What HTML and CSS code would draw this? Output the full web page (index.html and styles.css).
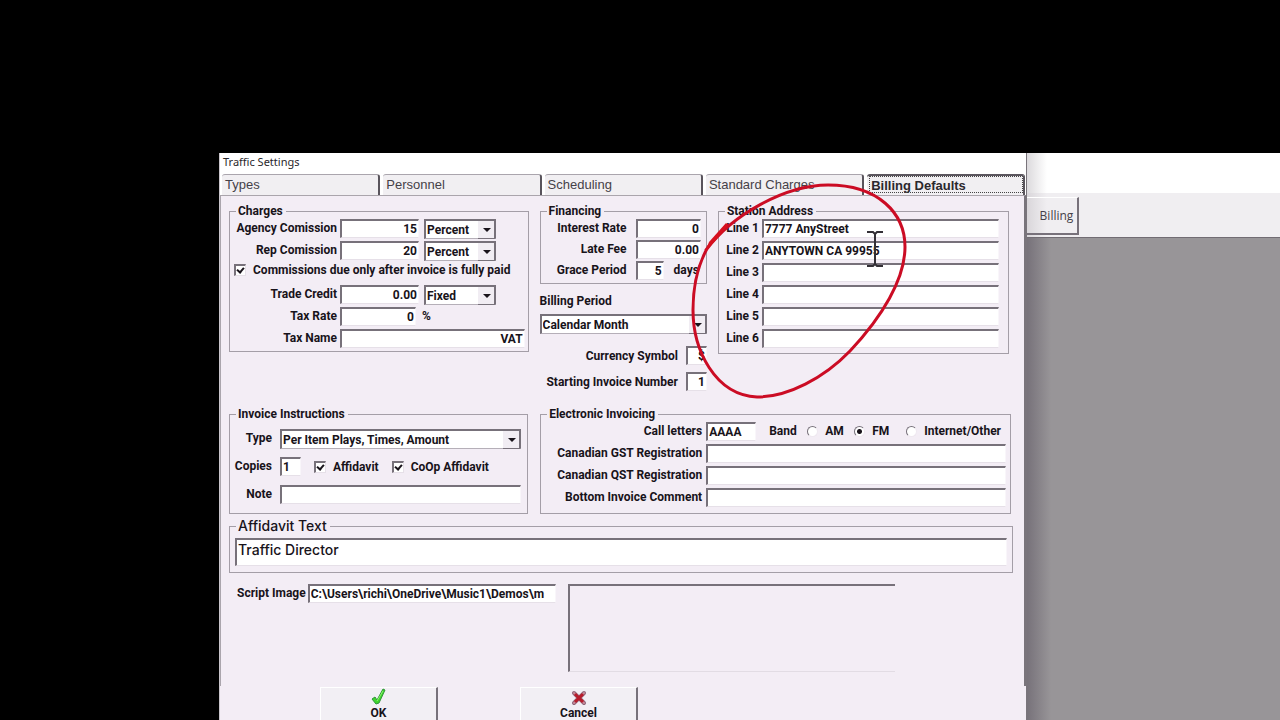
FILE: index.html
```html
<!DOCTYPE html>
<html lang="en">
<head>
<meta charset="utf-8">
<title>Traffic Settings</title>
<link rel="stylesheet" href="styles.css">
</head>
<body>
<main class="desktop">
  <section class="dialog" aria-label="Traffic Settings">
    <header class="titlebar">Traffic Settings</header>
    <nav class="tabs" role="tablist">
      <button class="tab" role="tab">Types</button>
      <button class="tab" role="tab">Personnel</button>
      <button class="tab" role="tab">Scheduling</button>
      <button class="tab" role="tab">Standard Charges</button>
      <button class="tab tab-active" role="tab" aria-selected="true">Billing Defaults</button>
    </nav>
    <form class="panel">
      <div class="row-top">
        <fieldset class="group charges">
          <legend>Charges</legend>
          <label class="lbl" for="agency">Agency Comission</label>
          <input class="field num" id="agency" value="15">
          <span class="combo"><select aria-label="Agency unit"><option>Percent</option><option>Fixed</option></select></span>
          <label class="lbl" for="rep">Rep Comission</label>
          <input class="field num" id="rep" value="20">
          <span class="combo"><select aria-label="Rep unit"><option>Percent</option><option>Fixed</option></select></span>
          <label class="check wide"><input type="checkbox" checked>Commissions due only after invoice is fully paid</label>
          <label class="lbl" for="credit">Trade Credit</label>
          <input class="field num" id="credit" value="0.00">
          <span class="combo"><select aria-label="Credit unit"><option>Fixed</option><option>Percent</option></select></span>
          <label class="lbl" for="rate">Tax Rate</label>
          <input class="field num rate" id="rate" value="0">
          <span class="unit">%</span>
          <label class="lbl" for="taxname">Tax Name</label>
          <input class="field num span-two" id="taxname" value="VAT">
        </fieldset>

        <div class="middle">
          <fieldset class="group financing">
            <legend>Financing</legend>
            <label class="lbl" for="interest">Interest Rate</label>
            <input class="field num" id="interest" value="0">
            <label class="lbl" for="late">Late Fee</label>
            <input class="field num" id="late" value="0.00">
            <label class="lbl" for="grace">Grace Period</label>
            <span class="grace"><input class="field num" id="grace" value="5">days</span>
          </fieldset>
          <label class="period-label" for="period">Billing Period</label>
          <span class="combo combo-period"><select id="period"><option>Calendar Month</option></select></span>
          <div class="small-row"><label for="currency">Currency Symbol</label><input class="field num" id="currency" value="$"></div>
          <div class="small-row"><label for="startno">Starting Invoice Number</label><input class="field num" id="startno" value="1"></div>
        </div>

        <fieldset class="group station">
          <legend>Station Address</legend>
          <label class="lbl" for="l1">Line 1</label><input class="field" id="l1" value="7777 AnyStreet">
          <label class="lbl" for="l2">Line 2</label><input class="field" id="l2" value="ANYTOWN CA 99955">
          <label class="lbl" for="l3">Line 3</label><input class="field" id="l3">
          <label class="lbl" for="l4">Line 4</label><input class="field" id="l4">
          <label class="lbl" for="l5">Line 5</label><input class="field" id="l5">
          <label class="lbl" for="l6">Line 6</label><input class="field" id="l6">
        </fieldset>
      </div>

      <div class="row-mid">
        <fieldset class="group invoice">
          <legend>Invoice Instructions</legend>
          <label class="lbl" for="type">Type</label>
          <span class="combo"><select id="type"><option>Per Item Plays, Times, Amount</option></select></span>
          <label class="lbl" for="copies">Copies</label>
          <div class="copies">
            <input class="field" id="copies" value="1">
            <label class="check"><input type="checkbox" checked>Affidavit</label>
            <label class="check"><input type="checkbox" checked>CoOp Affidavit</label>
          </div>
          <label class="lbl" for="note">Note</label>
          <input class="field" id="note">
        </fieldset>

        <fieldset class="group electronic">
          <legend>Electronic Invoicing</legend>
          <label class="lbl" for="call">Call letters</label>
          <div class="band">
            <input class="field" id="call" value="AAAA">
            <span>Band</span>
            <label class="radio"><input type="radio" name="band">AM</label>
            <label class="radio"><input type="radio" name="band" checked>FM</label>
            <label class="radio"><input type="radio" name="band">Internet/Other</label>
          </div>
          <label class="lbl" for="gst">Canadian GST Registration</label><input class="field" id="gst">
          <label class="lbl" for="qst">Canadian QST Registration</label><input class="field" id="qst">
          <label class="lbl" for="comment">Bottom Invoice Comment</label><input class="field" id="comment">
        </fieldset>
      </div>

      <fieldset class="group affidavit">
        <legend>Affidavit Text</legend>
        <input class="field" aria-label="Affidavit Text" value="Traffic Director">
      </fieldset>

      <div class="script-row">
        <label for="script">Script Image</label>
        <input class="field" id="script" value="C:\Users\richi\OneDrive\Music1\Demos\m">
        <div class="preview"></div>
      </div>
    </form>
    <footer class="actions">
      <button class="action">
        <svg width="16" height="18" viewBox="0 0 16 18"><path d="M1 11 L4 9 L6 12 L12 1 L14 2 L8 15 L5 16 Z" fill="#3fd52c" stroke="#31963a" stroke-width="1"/><path d="M6 13 L12 3" stroke="#8cf56c" stroke-width="1"/></svg>
        OK
      </button>
      <button class="action">
        <svg width="16" height="18" viewBox="0 0 16 18"><path d="M3 5 L13 15 M13 5 L3 15" stroke="#8d6478" stroke-width="4" stroke-linecap="round"/><path d="M3 5 L13 15 M13 5 L3 15" stroke="#c98a98" stroke-width="2" stroke-linecap="round"/><path d="M4 6 L12 14 M12 6 L4 14" stroke="#b81d2c" stroke-width="3"/></svg>
        Cancel
      </button>
    </footer>
    <svg class="marker" width="230" height="226" viewBox="685 176 230 226" aria-hidden="true">
      <path d="M706 250 C732 215 785 185 828 185 C878 185 905 213 905 247 C905 279 882 317 850 351 C824 378 788 397 757 397 C715 395 693 350 693 310 C693 286 697 266 708 247 L727 225" fill="none" stroke="#cb0c24" stroke-width="3" stroke-linejoin="round" stroke-linecap="round"/>
      <path d="M705 252 L709 242 L726 223 L728 226 L716 240 Z" fill="#d6101f"/>
    </svg>
    <svg class="caret" width="18" height="38" viewBox="0 0 18 38" aria-hidden="true">
      <path d="M1 2 H7 L9 4 L11 2 H17 M9 4 V34 M1 36 H7 L9 34 L11 36 H17" fill="none" stroke="#333036" stroke-width="2"/>
    </svg>
  </section>

  <section class="backwindow" aria-label="Billing window">
    <div class="back-title"></div>
    <div class="toolbar"><button class="tool">Billing</button></div>
    <div class="workspace"></div>
  </section>
</main>
</body>
</html>
```
FILE: styles.css
```css
* { box-sizing: border-box; }

body {
  margin: 0;
  background: #000;
  color: #18131a;
  font: bold 12px/14px Roboto, "Liberation Sans", sans-serif;
  height: 100vh;
  overflow: hidden;
}

input, select, button { font: inherit; color: inherit; margin: 0; border-radius: 0; }

.desktop {
  display: flex;
  height: 100vh;
  padding: 153px 0 0 219px;
}

.dialog {
  position: relative;
  flex: 808 1 0;
  min-width: 0;
  height: 600px;
  background: #f3edf5;
  border-left: 1px solid #c9c5cb;
  border-right: 1px solid #79747b;
}

.titlebar {
  height: 21px;
  padding: 0 3px;
  background: #fff;
  color: #29262b;
  font: 11px/17px "Noto Sans", sans-serif;
}

.tabs {
  display: grid;
  grid-template-columns: repeat(5, 1fr);
  gap: 3px;
  height: 21px;
  padding: 0 1px 0 2px;
  background: #fff;
}

.tab {
  padding: 0 3px;
  border: 0;
  border-top: 1px solid #aaa5ad;
  border-right: 2px solid #59545c;
  border-radius: 3px 3px 0 0;
  background: #f1eff2;
  color: #454148;
  font: 13px/18px "Liberation Sans", sans-serif;
  text-align: left;
}

.tab-active {
  border-top: 2px solid #5b565e;
  outline: 1px dotted #444;
  outline-offset: -3px;
  padding: 0 4px;
  color: #2b282d;
  font-weight: bold;
}

.panel {
  display: flex;
  flex-direction: column;
  height: 491px;
  padding: 8px 11px 0 8px;
  border: 1px solid #aaa5ac;
  border-right: 2px solid #79747b;
  border-bottom: 0;
}

.group {
  display: grid;
  align-content: start;
  grid-auto-rows: 20px;
  min-width: 0;
  margin: 0;
  padding: 1px 0 0;
  border: 1px solid #a49ea7;
}

.group legend { margin-left: 6px; padding: 0 3px 0 2px; height: 14px; }

.lbl { text-align: right; line-height: 19px; white-space: nowrap; }

.field {
  width: 100%;
  min-width: 0;
  height: 19px;
  padding: 0 1px;
  border: 2px solid #77717a;
  border-right: 1px solid #f9f6fa;
  border-bottom: 1px solid #e6e0e8;
  background: #fff;
  outline: 0;
}

.num { text-align: right; }

.combo { position: relative; display: block; height: 20px; }

.combo select {
  width: 100%;
  height: 20px;
  padding: 0 1px;
  border: 2px solid #77717a;
  border-right-width: 1px;
  border-bottom: 1px solid #b5afb8;
  background: #fff;
  appearance: none;
  outline: 0;
}

.combo::before {
  content: "";
  position: absolute;
  top: 2px;
  right: 1px;
  width: 16px;
  height: 17px;
  background: #f1edf3;
  border-right: 1px solid #77717a;
  border-bottom: 1px solid #77717a;
  pointer-events: none;
}

.combo::after {
  content: "";
  position: absolute;
  top: 9px;
  right: 5px;
  border: 4px solid transparent;
  border-top-color: #18131a;
  border-bottom: 0;
  pointer-events: none;
}

.row-top {
  display: grid;
  grid-template-columns: 299fr 167fr 291fr;
  gap: 11px;
  align-items: start;
  padding-right: 4px;
}

.charges { grid-template-columns: 107px 79px 1fr; column-gap: 3px; row-gap: 2px; padding-bottom: 2px; }
.charges .combo { width: 72px; margin-left: 2px; }
.charges .rate { width: 76px; }
.wide { grid-column: 1 / -1; padding-left: 4px; }
.span-two { grid-column: 2 / -1; width: auto; margin-right: 3px; }
.unit { line-height: 18px; }

.check { display: flex; align-items: center; gap: 7px; height: 14px; white-space: nowrap; }

.check input {
  appearance: none;
  position: relative;
  width: 12px;
  height: 12px;
  border: 1px solid #77717a;
  border-width: 2px 1px 1px 2px;
  border-right-color: #e6e0e8;
  border-bottom-color: #e6e0e8;
  background: #fff;
}

.check input:checked::after {
  content: "";
  position: absolute;
  left: 2px;
  top: 0;
  width: 3px;
  height: 5px;
  border: solid #18131a;
  border-width: 0 2px 2px 0;
  transform: rotate(40deg);
}

.middle { display: flex; flex-direction: column; }
.financing { grid-template-columns: 86px 1fr; column-gap: 9px; row-gap: 1px; padding: 1px 5px 2px 0; }
.grace { display: flex; gap: 10px; line-height: 19px; }
.grace .field { flex: none; width: 28px; }
.period-label { margin: 10px 0 6px; }
.combo-period { margin-bottom: 12px; }
.small-row { display: flex; justify-content: flex-end; gap: 8px; height: 20px; margin-bottom: 6px; line-height: 20px; white-space: nowrap; }
.small-row .field { width: 21px; }

.station { grid-template-columns: 40px 1fr; column-gap: 3px; row-gap: 2px; padding: 1px 9px 4px 0; }

.row-mid {
  display: grid;
  grid-template-columns: 299fr 471fr;
  gap: 12px;
  margin-top: 9px;
  padding-right: 2px;
}

.invoice { grid-template-columns: 42px 1fr; column-gap: 8px; row-gap: 8px; padding: 8px 6px 8px 0; }
.copies { display: flex; gap: 13px; }
.copies .field { flex: none; width: 21px; }
.copies .check { height: 20px; }

.electronic { grid-template-columns: 161px 1fr; column-gap: 4px; row-gap: 2px; padding: 1px 4px 5px 0; }
.band { display: grid; grid-template-columns: 63px 38px 47px 52px 1fr; line-height: 19px; white-space: nowrap; }
.band .field { width: 50px; }
.radio { display: flex; align-items: center; gap: 7px; height: 19px; }

.radio input {
  appearance: none;
  flex: none;
  width: 11px;
  height: 11px;
  border: 1px solid #77717a;
  border-right-color: #eee8f0;
  border-bottom-color: #eee8f0;
  border-radius: 50%;
  background: #fff;
}

.radio input:checked { background: radial-gradient(#18131a 2px, #fff 3px); }

.affidavit { grid-auto-rows: 28px; margin-top: 4px; padding: 4px 0 6px; font: 500 14px/16px Inter, sans-serif; }
.affidavit legend { height: 16px; }
.affidavit .field { width: auto; height: 28px; margin: 0 5px; padding-bottom: 6px; }

.script-row { display: flex; align-items: flex-start; margin-top: 11px; padding-left: 8px; line-height: 18px; }
.script-row .field { flex: 246 1 0; margin-left: 2px; }
.preview { flex: 330 1 0; height: 88px; margin: 0 118px 0 12px; border: 2px solid #77717a; border-right: 0; border-bottom: 1px solid #e2dce4; }

.actions {
  display: grid;
  grid-template-columns: 118px 118px;
  column-gap: 82px;
  padding: 1px 0 0 100px;
}

.action {
  display: flex;
  flex-direction: column;
  align-items: center;
  height: 44px;
  padding: 0;
  border: 1px solid #fff;
  border-right: 2px solid #77717a;
  border-bottom: 2px solid #77717a;
  background: #f2eff4;
}

.backwindow {
  flex: 253 1 0;
  display: flex;
  flex-direction: column;
  min-width: 0;
  background: linear-gradient(90deg, #77727a, #989598 24px);
}

.back-title { height: 40px; background: linear-gradient(90deg, #dcdadd, #fff 20px); }
.toolbar { height: 45px; padding-top: 4px; border-bottom: 1px solid #716c73; background: linear-gradient(90deg, #d9d6da, #f0eef1 20px); }

.tool {
  width: 52px;
  height: 38px;
  padding: 0 4px 0 12px;
  border: 1px solid #fff;
  border-left: 0;
  border-right: 2px solid #77717a;
  border-bottom: 2px solid #77717a;
  background: transparent;
  color: #454148;
  font: 12px/14px "Open Sans", sans-serif;
}

.workspace { flex: 1; }

.marker { position: absolute; left: 465px; top: 23px; pointer-events: none; }
.caret { position: absolute; left: 646px; top: 77px; pointer-events: none; }
```
